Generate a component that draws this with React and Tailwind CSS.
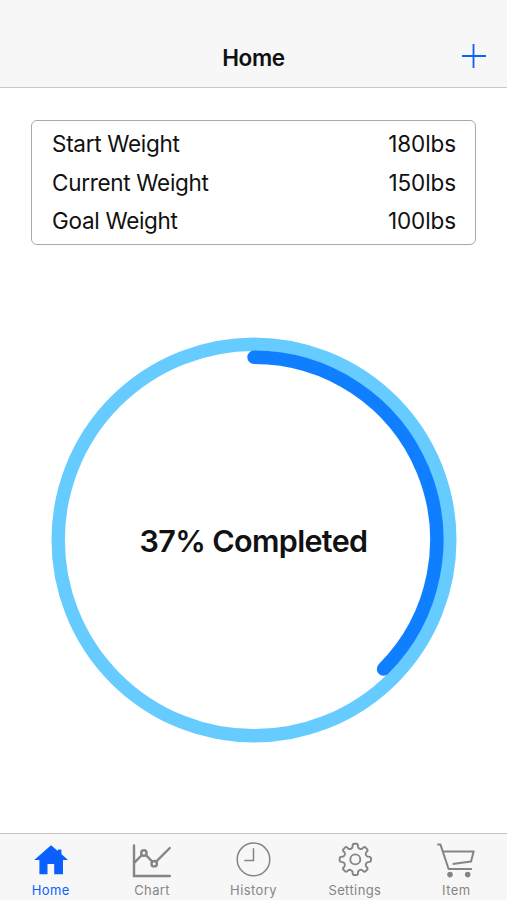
const weights = [
  { label: 'Start Weight', value: '180lbs' },
  { label: 'Current Weight', value: '150lbs' },
  { label: 'Goal Weight', value: '100lbs' },
];

function HomeIcon() {
  return (
    <svg className="h-10 w-11" viewBox="0 0 44 40" fill="currentColor">
      <path d="M22 5.2 28.9 11V9.4H32.4V14L39 19.9H34V34.3H25.2V24H18.5V34.3H10.4V19.9H5.2Z" />
    </svg>
  );
}

function ChartIcon() {
  return (
    <svg className="h-10 w-11" viewBox="0 0 44 40" fill="none" stroke="currentColor" strokeWidth="2.4" strokeLinecap="round">
      <path d="M4 5.4V36H39.8M4.4 22.6 11.9 15M15.8 14.9 22.3 21.8M26.1 21.7 39.8 8" />
      <circle cx="13.9" cy="13" r="2.7" />
      <circle cx="24.2" cy="23.7" r="2.7" />
    </svg>
  );
}

function HistoryIcon() {
  return (
    <svg className="h-10 w-11" viewBox="0 0 44 40" fill="none" stroke="currentColor" strokeWidth="1.5">
      <circle cx="22.5" cy="19.4" r="16.3" />
      <path d="M22.5 8.3V20.6H13.3" />
    </svg>
  );
}

const point = (r, deg) => {
  const a = (deg * Math.PI) / 180;
  return `${(22.3 + r * Math.cos(a)).toFixed(2)} ${(19.4 + r * Math.sin(a)).toFixed(2)}`;
};

// one tooth every 45 degrees, with a round notch between neighbours
const gearPath =
  Array.from({ length: 8 }, (_, i) => {
    const t = i * 45;
    return `${i ? 'L' : 'M'}${point(12.9, t - 12)}Q${point(15.6, t - 11)} ${point(15.7, t - 5)}L${point(15.7, t + 5)}Q${point(15.6, t + 11)} ${point(12.9, t + 12)}A2.9 2.9 0 0 0 ${point(12.9, t + 33)}`;
  }).join('') + 'Z';

function SettingsIcon() {
  return (
    <svg className="h-10 w-11" viewBox="0 0 44 40" fill="none" stroke="currentColor" strokeWidth="1.9" strokeLinejoin="round">
      <path d={gearPath} />
      <circle cx="22.3" cy="19.4" r="5" />
    </svg>
  );
}

function CartIcon() {
  return (
    <svg className="h-10 w-11" viewBox="0 0 44 40" fill="none" stroke="currentColor" strokeWidth="2" strokeLinejoin="round">
      <path d="M3.2 4.4H6.4L14.6 29H37.9M9 11.6H39.7L37 21.6 18.6 24" />
      <circle cx="16" cy="34.6" r="2.8" fill="currentColor" stroke="none" />
      <circle cx="33.7" cy="34.6" r="2.8" fill="currentColor" stroke="none" />
    </svg>
  );
}

const tabs = [
  { label: 'Home', icon: HomeIcon, active: true },
  { label: 'Chart', icon: ChartIcon },
  { label: 'History', icon: HistoryIcon },
  { label: 'Settings', icon: SettingsIcon },
  { label: 'Item', icon: CartIcon },
];

function ProgressRing() {
  return (
    <div className="relative mx-auto mt-[92px] h-[406px] w-[406px]">
      <svg className="h-full w-full" viewBox="0 0 406 406" fill="none">
        <circle cx="203" cy="203" r="195.8" stroke="#66ccff" strokeWidth="13.4" />
        <path d="M203 20.2A182.8 182.8 0 0 1 332.5 332" stroke="#0f7fff" strokeWidth="13.4" strokeLinecap="round" />
      </svg>
      <div className="absolute inset-0 flex items-center justify-center">
        <span className="mt-0.5 whitespace-nowrap text-[30.5px] font-semibold tracking-[-0.65px]">37% Completed</span>
      </div>
    </div>
  );
}

export default function App() {
  return (
    <div className="flex h-[900px] w-full flex-col overflow-hidden bg-white font-['Inter',sans-serif] text-[#111]">
      <header className="grid h-[88px] shrink-0 grid-cols-3 items-end border-b border-[#c9c9c9] bg-[#f7f7f7] pb-[11px]">
        <h1 className="col-start-2 text-center text-[22.5px] leading-9 font-semibold tracking-[-0.35px]">Home</h1>
        <button type="button" aria-label="Add" className="mr-[21px] mb-2 justify-self-end text-[#0b63f6]">
          <svg className="h-6 w-6" viewBox="0 0 24 24" stroke="currentColor" strokeWidth="1.8">
            <path d="M11.5 0V24M0 12H24" />
          </svg>
        </button>
      </header>

      <main className="flex-1">
        <div className="mx-[31px] mt-8 h-[125px] rounded-[6px] border-[1.5px] border-[#a9a9a9] px-5 pt-[4px]">
          {weights.map(({ label, value }) => (
            <div key={label} className="flex h-[38.5px] items-center justify-between text-[22.5px]">
              <span className="tracking-[-0.3px]">{label}</span>
              <span className="-mr-px tracking-[-0.1px]">{value}</span>
            </div>
          ))}
        </div>
        <ProgressRing />
      </main>

      <nav className="grid h-[67px] shrink-0 grid-cols-5 border-t border-[#c4c4c4] bg-[#f7f7f7] pt-[6px]">
        {tabs.map(({ label, icon: Icon, active }) => (
          <button key={label} type="button" className={`flex flex-col items-center ${active ? 'text-[#0a60ff]' : 'text-[#858585]'}`}>
            <Icon />
            <span className="mt-[2px] text-[13px] leading-4 tracking-[0.4px]">{label}</span>
          </button>
        ))}
      </nav>
    </div>
  );
}
